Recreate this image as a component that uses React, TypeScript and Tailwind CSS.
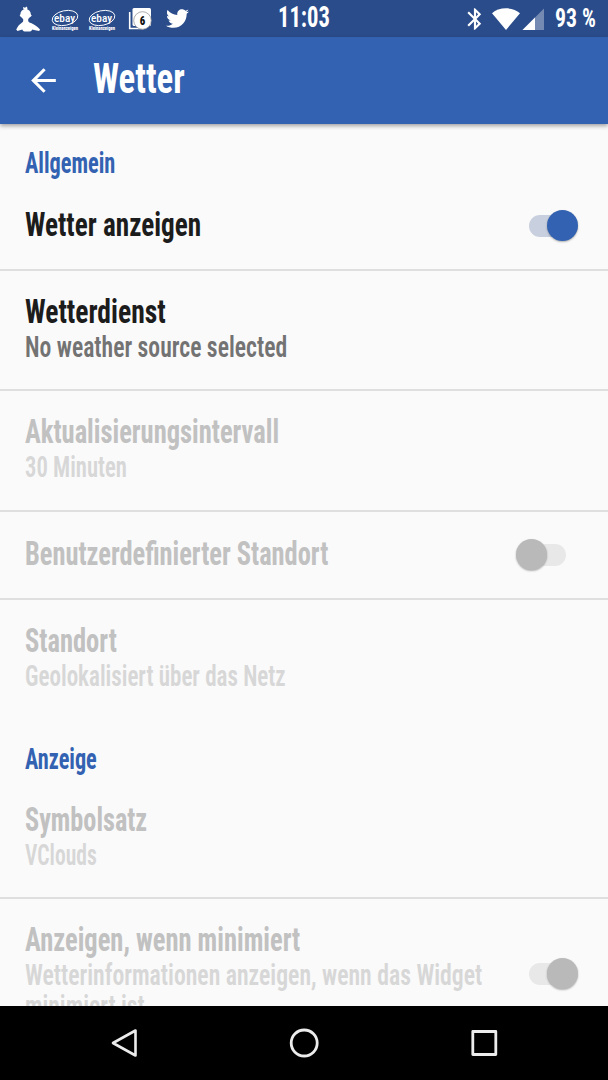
import { useLayoutEffect, useRef, useState } from 'react'
import clsx from 'clsx'
import { FaTwitter } from 'react-icons/fa'
import { MdArrowBack, MdBluetooth } from 'react-icons/md'

interface CondensedProps {
  text: string
  width: number
  className?: string
}

// Squeezes a line of text horizontally so it fills the given width
function Condensed({ text, width, className }: CondensedProps) {
  const ref = useRef<HTMLSpanElement>(null)
  const [scale, setScale] = useState(1)

  useLayoutEffect(() => {
    if (ref.current) setScale(width / ref.current.offsetWidth)
  }, [text, width])

  return (
    <span className={clsx('block whitespace-nowrap', className)} style={{ width }}>
      <span ref={ref} className="inline-block origin-left" style={{ transform: `scaleX(${scale})` }}>
        {text}
      </span>
    </span>
  )
}

interface SwitchProps {
  checked?: boolean
  disabled?: boolean
}

function Switch({ checked, disabled }: SwitchProps) {
  return (
    <div
      role="switch"
      aria-checked={!!checked}
      className="relative flex h-[31px] w-[62px] shrink-0 items-center justify-center"
    >
      <div className={clsx('h-[22px] w-[37px] rounded-full', disabled ? 'bg-[#e8e8e8]' : 'bg-[#c8cfde]')} />
      <div
        className={clsx(
          'absolute top-0 size-[31px] rounded-full shadow-[0_1px_2px_rgba(0,0,0,0.3)]',
          checked ? 'right-0' : 'left-0',
          disabled ? 'bg-[#b9b9b9]' : 'bg-[#3262b1]'
        )}
      />
    </div>
  )
}

interface Line {
  text: string
  width: number
}

interface Preference {
  title: Line
  summary?: Line[]
  toggle?: 'on' | 'off'
  enabled?: boolean
  last?: boolean
}

const sections: { heading: Line; items: Preference[] }[] = [
  {
    heading: { text: 'Allgemein', width: 90 },
    items: [
      { title: { text: 'Wetter anzeigen', width: 176 }, toggle: 'on', enabled: true },
      {
        title: { text: 'Wetterdienst', width: 141 },
        summary: [{ text: 'No weather source selected', width: 262 }],
        enabled: true,
      },
      {
        title: { text: 'Aktualisierungsintervall', width: 254 },
        summary: [{ text: '30 Minuten', width: 102 }],
      },
      { title: { text: 'Benutzerdefinierter Standort', width: 303 }, toggle: 'off' },
      {
        title: { text: 'Standort', width: 92 },
        summary: [{ text: 'Geolokalisiert über das Netz', width: 261 }],
        last: true,
      },
    ],
  },
  {
    heading: { text: 'Anzeige', width: 72 },
    items: [
      {
        title: { text: 'Symbolsatz', width: 122 },
        summary: [{ text: 'VClouds', width: 72 }],
      },
      {
        title: { text: 'Anzeigen, wenn minimiert', width: 275 },
        summary: [
          { text: 'Wetterinformationen anzeigen, wenn das Widget', width: 457 },
          { text: 'minimiert ist', width: 120 },
        ],
        toggle: 'on',
        last: true,
      },
    ],
  },
]

function PreferenceRow({ title, summary, toggle, enabled, last }: Preference) {
  return (
    <li
      className={clsx(
        'flex justify-between pr-[30px] pl-[24.5px]',
        !last && 'border-b-2 border-[#dfdfdf]',
        summary ? 'pt-5' : 'h-[88px] items-center',
        summary && summary.length === 1 && 'h-[120.5px]'
      )}
    >
      <div className={clsx(!summary && 'pb-1')}>
        <Condensed
          {...title}
          className={clsx('text-[34px] leading-10 font-bold', enabled ? 'text-[#1c1c1c]' : 'text-[#c1c1c1]')}
        />
        {summary?.map((line) => (
          <Condensed
            key={line.text}
            {...line}
            className={clsx(
              'text-[30px] leading-[31px] font-semibold',
              enabled ? 'text-[#737373]' : 'text-[#d7d7d7]'
            )}
          />
        ))}
      </div>
      {toggle && (
        <div className={clsx(summary && 'pt-[39px]')}>
          <Switch checked={toggle === 'on'} disabled={!enabled} />
        </div>
      )}
    </li>
  )
}

function EbayIcon() {
  return (
    <svg width="28" height="24" viewBox="0 0 28 24" fill="none">
      <ellipse cx="14" cy="9" rx="13" ry="7.300" transform="rotate(-12 14 9)" stroke="#fff" strokeWidth="0.900" />
      <text x="3" y="12.500" textLength="21" lengthAdjust="spacingAndGlyphs" fontSize="11.500" fontWeight="500" fill="#fff">
        ebay
      </text>
      <text x="1" y="21" textLength="26" lengthAdjust="spacingAndGlyphs" fontSize="5" fontWeight="800" fill="#fff">
        Kleinanzeigen
      </text>
    </svg>
  )
}

function StatusBar() {
  return (
    <div className="grid h-[37px] shrink-0 grid-cols-[1fr_52px_1fr] bg-[#2a4c8a] text-white">
      <div className="flex items-center pl-4">
        <svg width="25" height="26" viewBox="0 0 25 26" fill="#fff">
          <circle cx="9.600" cy="8.300" r="5.200" />
          <path d="M7.500 3.500 7 1l2 .8L10.500.5l1 1.500L11 4Z" />
          <path d="M4.500 8.500h10.300l1 1.200-1.700 1.300H5.200L3.600 9.700Z" />
          <path d="M7.200 11h5v4c.4 1 1.300 1.500 2.800 2.100 3.200 1.300 6.700 3.700 9 6.400l-.8 1.500-5.200-1-1.700-.4c-.5 1-1.200 1.800-2.300 1.900H8.500c-1.200-.1-1.700-.9-2.200-1.900l-4.800 1.500L.2 23.500C1.700 20.500 3.300 18.300 5.500 17c1-.6 1.600-1.100 1.700-2Z" />
        </svg>
        <div className="ml-[10px] flex items-center gap-[9px] pt-1">
          <EbayIcon />
          <EbayIcon />
        </div>
        <svg className="ml-3" width="24" height="24" viewBox="0 0 24 24">
          <path d="M1.700 5v16.500H16" fill="none" stroke="#fff" strokeWidth="1.600" />
          <rect x="4.500" y="1" width="18.500" height="18" rx="1.500" fill="#fff" />
          <circle cx="14.500" cy="13.500" r="8.800" fill="#fff" stroke="#8b8b8b" strokeWidth="0.700" />
          <text x="11.700" y="18.200" textLength="5.500" lengthAdjust="spacingAndGlyphs" fontSize="13" fontWeight="900" fill="#111">
            6
          </text>
        </svg>
        <FaTwitter className="ml-[14px] size-[23px]" />
      </div>
      <Condensed text="11:03" width={52} className="pt-px text-[30px] leading-8 font-bold" />
      <div className="flex items-center justify-end pr-3">
        <MdBluetooth className="size-[26px]" />
        <svg className="ml-1" width="28" height="22" viewBox="0 0 28 22" fill="#fff">
          <path d="M14 22 0 5.200C3.500 2.200 8.500.3 14 .3s10.500 1.900 14 4.900Z" />
        </svg>
        <svg className="ml-[2px]" width="23" height="22" viewBox="0 0 23 22" fill="#fff">
          <path d="M22 .5V22H.5Z" opacity="0.350" />
          <path d="M13 9.500V22H.5Z" />
        </svg>
        <Condensed text="93 %" width={41} className="ml-[10px] text-[25px] leading-8 font-bold" />
      </div>
    </div>
  )
}

function NavigationBar() {
  return (
    <div className="flex h-[74px] shrink-0 items-center justify-center gap-[150px] bg-black">
      <svg width="30" height="30" viewBox="0 0 30 30" fill="none" stroke="#ececec" strokeWidth="2.600" strokeLinejoin="round">
        <path d="M26.500 2.500v25L4 15Z" />
      </svg>
      <svg width="30" height="30" viewBox="0 0 30 30" fill="none" stroke="#ececec" strokeWidth="2.800">
        <circle cx="15.200" cy="15" r="13" />
      </svg>
      <svg width="30" height="30" viewBox="0 0 30 30" fill="none" stroke="#ececec" strokeWidth="2.800" strokeLinejoin="round">
        <rect x="3.800" y="3.500" width="23" height="23" />
      </svg>
    </div>
  )
}

export default function App() {
  return (
    <div className="flex h-[1080px] w-[608px] flex-col overflow-hidden bg-[#fafafa] font-['Roboto','Liberation_Sans',sans-serif] [font-stretch:75%]">
      <StatusBar />
      <header className="z-10 flex h-[87px] shrink-0 items-center bg-[#3262b1] text-white shadow-[0_2px_4px_rgba(0,0,0,0.35)]">
        <MdArrowBack className="ml-[25px] size-[37px]" />
        <Condensed text="Wetter" width={92} className="ml-[31px] pb-1 text-[42px] leading-[50px] font-bold" />
      </header>
      <main className="min-h-0 flex-1 overflow-hidden">
        {sections.map(({ heading, items }) => (
          <section key={heading.text}>
            <h2 className="flex h-[58.5px] items-end pb-1 pl-[24.5px]">
              <Condensed {...heading} className="text-[30px] leading-8 font-bold text-[#3262b1]" />
            </h2>
            <ul>
              {items.map((item) => (
                <PreferenceRow key={item.title.text} {...item} />
              ))}
            </ul>
          </section>
        ))}
      </main>
      <NavigationBar />
    </div>
  )
}
